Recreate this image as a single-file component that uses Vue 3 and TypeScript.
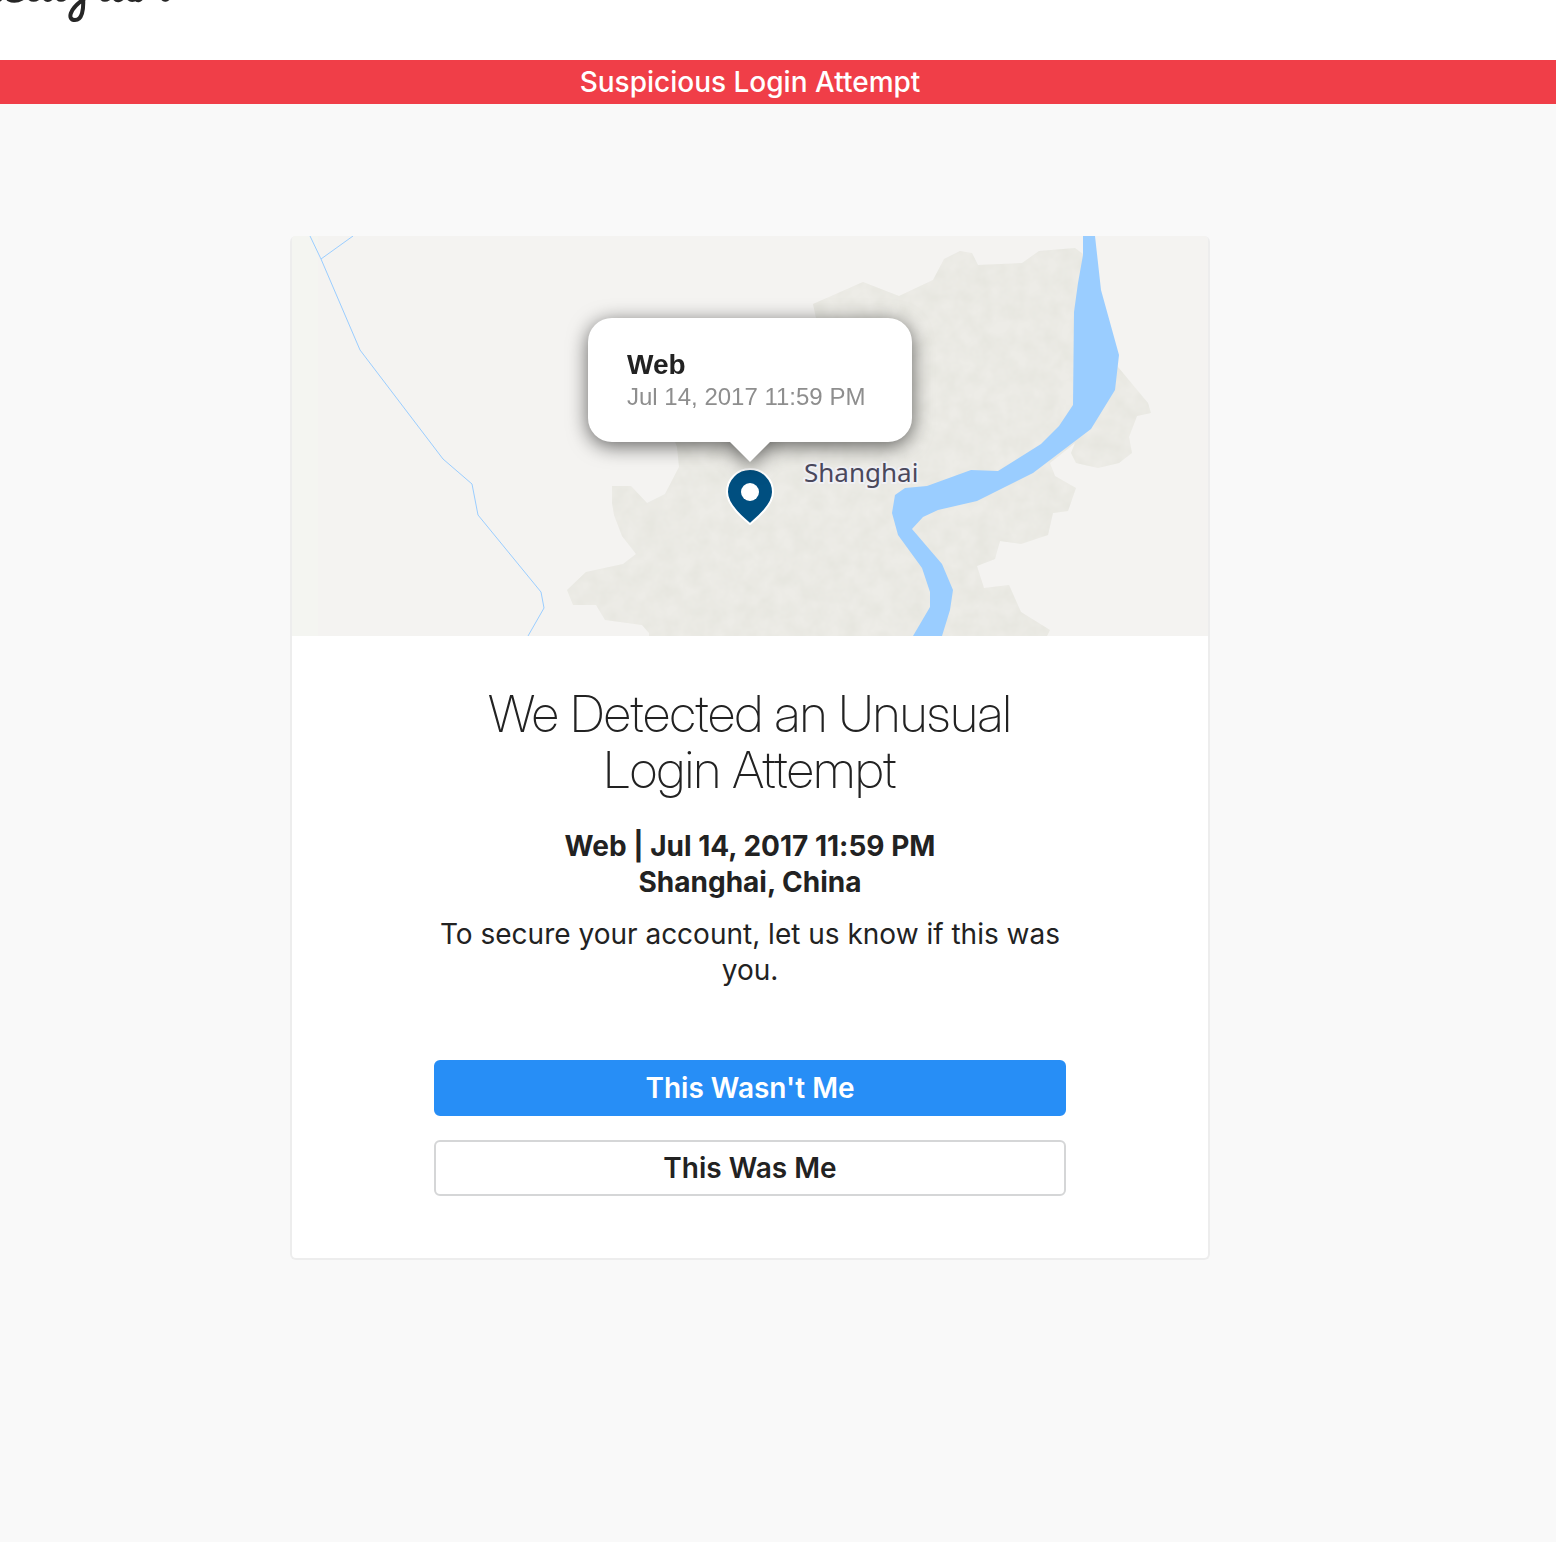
<script setup lang="ts">
interface LoginAttempt {
  device: string
  time: string
  city: string
  country: string
}

const attempt: LoginAttempt = {
  device: 'Web',
  time: 'Jul 14, 2017 11:59 PM',
  city: 'Shanghai',
  country: 'China',
}
</script>

<template>
  <div class="page">
    <header class="topbar">
      <a class="brand" href="#" aria-label="Instagram">
        <svg width="180" height="24" viewBox="0 0 180 24" fill="none" stroke="#262626" stroke-linecap="round" stroke-linejoin="round">
          <path stroke-width="5" d="M-2 0L2 -3M9 -1Q15 2 22 -2M30 -2Q34 1 39 -3M45 -2Q48 1 52 -3M58 -2Q61 1 66 -3" />
          <path stroke-width="4" d="M83 -3C84 10 82 20 75 20C67 20 69 9 84 -1" />
          <path stroke-width="5" d="M102 -2Q105 1 110 -3M115 -2Q118 2 123 -3M129 -2Q132 1 136 -2Q138 2 142 -3M163 -2Q165 1 169 -3" />
        </svg>
      </a>
    </header>

    <div class="banner" role="alert">Suspicious Login Attempt</div>

    <main class="content">
      <section class="card">
        <div class="map">
          <svg class="terrain" viewBox="0 0 916 400" role="img" aria-label="Map of Shanghai">
            <defs>
              <filter id="relief" x="0" y="0" width="100%" height="100%" color-interpolation-filters="sRGB">
                <feTurbulence type="fractalNoise" baseFrequency="0.06" numOctaves="3" seed="4" />
                <feColorMatrix values="0 0 0 0 0.89  0 0 0 0 0.89  0 0 0 0 0.86  1 0 0 0 -0.25" />
              </filter>
              <clipPath id="urban">
                <path d="M521 68L571 46L607 60L641 44L652 23L668 15L680 17L686 29L730 27L747 15L783 12L791 18L826 131L856 167L859 177L845 180L837 201L840 217L827 227L806 232L784 227L779 217L783 207L758 227L763 240L784 252L776 275L761 277L756 299L729 308L708 305L703 323L685 330L692 352L717 349L729 376L758 394L755 400H357V397L350 389L313 384L304 369H281L275 354L294 336L331 328L344 318L330 300L322 279L320 267V250H339L355 267L373 258L387 231L385 211L381 200V82H524Z" />
              </clipPath>
            </defs>
            <rect width="916" height="400" fill="#f4f3f1" />
            <rect width="26" height="400" fill="#f4f5f1" />
            <g clip-path="url(#urban)">
              <rect width="916" height="400" fill="#edece7" />
              <rect width="916" height="400" filter="url(#relief)" />
            </g>
            <path fill="#9acdff" d="M791 0V19L786 47L782 76L781 169L767 190L749 208L706 235L679 234L635 250L613 252L603 259L600 277L606 299L630 332L638 356V371L621 400H650L658 374L661 354L650 328L620 293L631 281L646 274L685 265L741 237L799 193L823 154L827 119L809 54L803 0Z" />
            <path fill="none" stroke="#9acdff" d="M18 0L29 23L68 114L151 223L180 248L186 279L249 356L252 372L236 400M29 23L61 0" />
            <text class="city" x="512" y="246">{{ attempt.city }}</text>
          </svg>

          <div class="marker">
            <div class="popover">
              <strong class="popover-title">{{ attempt.device }}</strong>
              <span class="popover-time">{{ attempt.time }}</span>
            </div>
            <svg class="pin" width="48" height="58" viewBox="0 0 48 58">
              <path fill="#004f80" stroke="#fff" stroke-width="2" d="M24 56C18 51 1 38 1 24A23 23 0 0 1 47 24C47 38 30 51 24 56Z" />
              <circle cx="24" cy="24" r="9" fill="#fff" />
            </svg>
          </div>
        </div>

        <div class="body">
          <h1>We Detected an Unusual<br />Login Attempt</h1>
          <p class="where">{{ attempt.device }} | {{ attempt.time }}<br />{{ attempt.city }}, {{ attempt.country }}</p>
          <p class="hint">To secure your account, let us know if this was you.</p>
          <div class="actions">
            <button class="btn primary" type="button">This Wasn't Me</button>
            <button class="btn" type="button">This Was Me</button>
          </div>
        </div>
      </section>
    </main>
  </div>
</template>

<style>
body {
  background: #f9f9f9;
}
</style>

<style scoped>
.page {
  min-height: 100vh;
  box-sizing: border-box;
  color: #222;
  font-family: Inter, sans-serif;
  font-size: 28px;
  font-variant-ligatures: none;
  line-height: 36px;
}

.topbar {
  height: 60px;
  background: #fff;
}

.brand {
  display: block;
  width: 180px;
}

.brand svg {
  display: block;
}

.banner {
  padding: 4px 56px 4px 0;
  background: #f03e48;
  color: #fff;
  font-weight: 500;
  text-align: center;
}

.content {
  display: flex;
  justify-content: center;
  padding: 132px 56px 132px 0;
}

.card {
  box-sizing: border-box;
  width: 920px;
  max-width: 100%;
  border: 2px solid #ededed;
  border-top: 0;
  border-radius: 6px;
  background: #fff;
}

.map {
  position: relative;
}

.terrain {
  display: block;
  width: 100%;
  height: auto;
  border-radius: 4px 4px 0 0;
}

.city {
  fill: #4a485c;
  stroke: #f0f0f4;
  stroke-width: 4px;
  stroke-linejoin: round;
  paint-order: stroke;
  font-family: "Noto Sans", sans-serif;
  font-size: 26px;
}

.marker {
  position: absolute;
  top: 82px;
  left: 50%;
  display: flex;
  flex-direction: column;
  align-items: center;
  gap: 26px;
  transform: translateX(-50%);
}

.popover {
  position: relative;
  box-sizing: border-box;
  display: flex;
  flex-direction: column;
  width: 324px;
  height: 124px;
  padding: 31px 0 0 39px;
  border-radius: 24px;
  background: #fff;
  font-family: "Liberation Sans", sans-serif;
  line-height: 32px;
  white-space: nowrap;
  filter: drop-shadow(0 4px 10px rgba(0, 0, 0, 0.6));
}

.popover::after {
  content: "";
  position: absolute;
  top: 100%;
  left: 50%;
  border: 20px solid transparent;
  border-top-color: #fff;
  border-bottom: 0;
  transform: translateX(-50%);
}

.popover-time {
  color: #8e8e8e;
  font-size: 24px;
}

.pin {
  display: block;
}

.body {
  padding: 50px 142px 62px;
  text-align: center;
}

h1 {
  margin: 0 0 30px;
  font-family: "Inter Display", Inter, sans-serif;
  font-size: 51px;
  font-weight: 200;
  line-height: 56px;
}

p {
  margin: 0;
}

.where {
  margin-bottom: 16px;
  font-weight: 700;
}

.actions {
  display: flex;
  flex-direction: column;
  gap: 24px;
  margin-top: 72px;
}

.btn {
  height: 56px;
  padding: 0 16px;
  border: 2px solid #d5d6d7;
  border-radius: 6px;
  background: #fff;
  color: #222;
  font: inherit;
  font-weight: 600;
  cursor: pointer;
}

.btn.primary {
  border-color: #278ef6;
  background: #278ef6;
  color: #fff;
}
</style>
